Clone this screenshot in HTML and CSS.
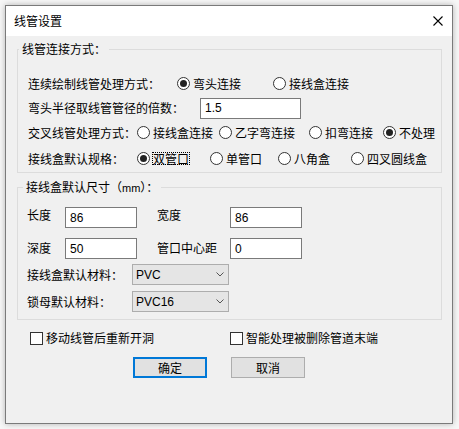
FILE: index.html
```html
<!DOCTYPE html>
<html lang="zh-CN">
<head>
<meta charset="utf-8">
<title>线管设置</title>
<link rel="stylesheet" href="styles.css">
</head>
<body>
<div class="window">
  <div class="titlebar">
    <span class="title">线管设置</span>
    <svg class="close" viewBox="0 0 10 10" width="10" height="10"><path d="M0.5 0.5 L9.5 9.5 M9.5 0.5 L0.5 9.5" stroke="#000" stroke-width="1.1" fill="none"/></svg>
  </div>
  <div class="content">
    <section class="group g1">
      <span class="caption">线管连接方式：</span>
      <div class="row r1">
        <span class="lbl w149">连续绘制线管处理方式：</span>
        <span class="opt w96"><span class="radio on"></span>弯头连接</span>
        <span class="opt"><span class="radio"></span>接线盒连接</span>
      </div>
      <div class="row r2">
        <span class="lbl w172">弯头半径取线管管径的倍数：</span>
        <div class="field w101">1.5</div>
      </div>
      <div class="row r3">
        <span class="lbl w109">交叉线管处理方式：</span>
        <span class="opt w82"><span class="radio"></span>接线盒连接</span>
        <span class="opt w90"><span class="radio"></span>乙字弯连接</span>
        <span class="opt w74"><span class="radio"></span>扣弯连接</span>
        <span class="opt"><span class="radio on"></span>不处理</span>
      </div>
      <div class="row r4">
        <span class="lbl w109">接线盒默认规格：</span>
        <span class="opt w73"><span class="radio on tight"></span><span class="focus">双管口</span></span>
        <span class="opt w68"><span class="radio"></span>单管口</span>
        <span class="opt w73"><span class="radio"></span>八角盒</span>
        <span class="opt"><span class="radio"></span>四叉圆线盒</span>
      </div>
    </section>

    <section class="group g2">
      <span class="caption">接线盒默认尺寸（<span class="latin">mm</span>）：</span>
      <div class="sizes">
        <span class="lbl upper">长度</span>
        <div class="field w72">86</div>
        <span class="lbl upper">宽度</span>
        <div class="field w72">86</div>
        <span class="lbl lower">深度</span>
        <div class="field w72">50</div>
        <span class="lbl lower">管口中心距</span>
        <div class="field w72">0</div>
      </div>
      <div class="row combo-row first">
        <span class="lbl w105">接线盒默认材料：</span>
        <div class="combo"><span>PVC</span><svg viewBox="0 0 8 5" width="8" height="5"><path d="M0.5 0.5 L4 4 L7.5 0.5" stroke="#555" stroke-width="1" fill="none"/></svg></div>
      </div>
      <div class="row combo-row">
        <span class="lbl w105">锁母默认材料：</span>
        <div class="combo"><span>PVC16</span><svg viewBox="0 0 8 5" width="8" height="5"><path d="M0.5 0.5 L4 4 L7.5 0.5" stroke="#555" stroke-width="1" fill="none"/></svg></div>
      </div>
    </section>

    <div class="checks">
      <span class="check"><span class="box"></span>移动线管后重新开洞</span>
      <span class="check"><span class="box"></span>智能处理被删除管道末端</span>
    </div>

    <div class="buttons">
      <div class="btn primary">确定</div>
      <div class="btn">取消</div>
    </div>
  </div>
</div>
</body>
</html>
```

FILE: styles.css
```css
* { box-sizing: border-box; }
html, body { margin: 0; }
body {
  background: #f7f7f7;
  padding: 5px;
  width: 459px;
  height: 429px;
  overflow: hidden;
  font-family: "Noto Sans CJK SC", "Liberation Sans", sans-serif;
  font-size: 12px;
  color: #000;
}
.window {
  width: 448px;
  height: 419px;
  border: 1px solid #7a7a7a;
  background: #f0f0f0;
  box-shadow: 0 0 6px rgba(0, 0, 0, 0.28);
  display: flex;
  flex-direction: column;
}
.titlebar {
  height: 30px;
  flex: none;
  background: #fff;
  display: flex;
  align-items: center;
  justify-content: space-between;
  padding: 0 9px 0 8px;
}
.title { line-height: 14px; }
.close { display: block; }

.content { padding: 0 10px 0 11px; }

.group {
  position: relative;
  width: 425px;
  border: 1px solid #dcdcdc;
}
.caption {
  position: absolute;
  top: -8px;
  left: 1px;
  padding: 0 3px;
  line-height: 14px;
  background: #f0f0f0;
  white-space: nowrap;
}
.latin { font-family: "Liberation Sans", sans-serif; font-size: 11px; }

.g1 { margin-top: 13px; padding: 21px 0 0 10px; }
.g2 { margin-top: 14px; padding: 19px 0 7px 9px; }
.g2 .caption { left: 5px; }

.row { display: flex; align-items: center; white-space: nowrap; }
.r1 { height: 25px; }
.r2 { height: 24px; }
.r3 { height: 25px; }
.r4 { height: 27px; }

.lbl { line-height: 14px; flex: none; white-space: nowrap; }
.w149 { width: 149px; }
.w172 { width: 172px; }
.w109 { width: 109px; }
.w105 { width: 105px; }

.opt { display: flex; align-items: center; flex: none; line-height: 14px; }
.w96 { width: 96px; }
.w82 { width: 82px; }
.w90 { width: 90px; }
.w74 { width: 74px; }
.w73 { width: 73px; }
.w68 { width: 68px; }

.radio {
  width: 13px;
  height: 13px;
  flex: none;
  border: 1px solid #333;
  border-radius: 50%;
  background: #fff;
  margin-right: 3px;
  display: flex;
  align-items: center;
  justify-content: center;
}
.radio.on::after {
  content: "";
  width: 7px;
  height: 7px;
  border-radius: 50%;
  background: #222;
}
.radio.tight { margin-right: 2px; }
.focus {
  border: 1px dotted #000;
  line-height: 11px;
  height: 13px;
  display: inline-flex;
  align-items: center;
}

.field {
  height: 21px;
  border: 1px solid #7a7a7a;
  background: #fff;
  font-family: "Liberation Sans", sans-serif;
  font-size: 12px;
  padding-left: 4px;
  display: flex;
  align-items: center;
  flex: none;
}
.w101 { width: 101px; }
.w72 { width: 72px; }

.sizes {
  display: grid;
  grid-template-columns: 38px 92px 73px 72px;
  grid-template-rows: 21px 21px;
  row-gap: 10px;
  align-items: center;
}
.upper { align-self: start; padding-top: 1px; }
.lower { align-self: start; padding-top: 3px; }

.combo-row { height: 21px; }
.combo-row.first { margin-top: 5px; }
.combo-row + .combo-row { margin-top: 6px; }
.combo {
  width: 97px;
  height: 21px;
  border: 1px solid #adadad;
  background: #e5e5e5;
  display: flex;
  align-items: center;
  justify-content: space-between;
  padding: 0 4px 0 3px;
  font-family: "Liberation Sans", sans-serif;
  font-size: 12px;
}
.combo svg { display: block; }

.checks {
  display: flex;
  align-items: center;
  height: 14px;
  margin-top: 11px;
  padding-left: 13px;
}
.check { display: flex; align-items: center; width: 200px; line-height: 14px; }
.box {
  width: 13px;
  height: 13px;
  border: 1px solid #333;
  background: #fff;
  margin-right: 3px;
  flex: none;
}

.buttons {
  display: flex;
  gap: 24px;
  margin-top: 12px;
  padding-left: 116px;
}
.btn {
  width: 74px;
  height: 21px;
  border: 1px solid #adadad;
  background: #e1e1e1;
  display: flex;
  align-items: center;
  justify-content: center;
  line-height: 14px;
}
.btn.primary { border: 2px solid #0078d7; }
```
